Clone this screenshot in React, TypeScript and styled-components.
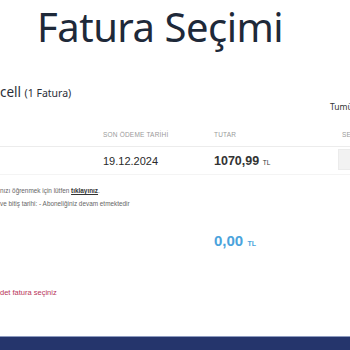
import styled, { createGlobalStyle } from "styled-components";

const GlobalStyle = createGlobalStyle`
  html, body {
    margin: 0;
    padding: 0;
    background: #ffffff;
  }
  body {
    width: 350px;
    height: 350px;
    overflow: hidden;
    font-family: "Liberation Sans", Arial, sans-serif;
  }
`;

const App = () => {
  return (
    <>
      <GlobalStyle />
      <Page>
        <Title>Fatura Seçimi</Title>
        <Company>
          cell <Count>(1 Fatura)</Count>
        </Company>
        <SelectAllRow>
          <SelectAll>Tumünü</SelectAll>
        </SelectAllRow>
        <HeaderRow>
          <span />
          <HeadCell>SON ÖDEME TARİHİ</HeadCell>
          <HeadCell>TUTAR</HeadCell>
          <HeadCell>SEÇ</HeadCell>
        </HeaderRow>
        <BillRow>
          <span />
          <DateCell>19.12.2024</DateCell>
          <Amount>
            1070,99 <Currency>TL</Currency>
          </Amount>
          <SelectBox />
        </BillRow>
        <Info>
          <InfoLine>
            nızı öğrenmek için lütfen <InfoLink>tıklayınız</InfoLink>.
          </InfoLine>
          <InfoLine>ve bitiş tarihi: - Aboneliğiniz devam etmektedir</InfoLine>
        </Info>
        <TotalRow>
          <Total>
            0,00 <TotalCurrency>TL</TotalCurrency>
          </Total>
        </TotalRow>
        <Warning>det fatura seçiniz</Warning>
        <Footer />
      </Page>
    </>
  );
};
export default App;

const Page = styled.div`
  width: 350px;
  height: 350px;
  display: flex;
  flex-direction: column;
  overflow: hidden;
`;

const Title = styled.h1`
  margin: 0;
  padding: 3px 0 0 37px;
  height: 57px;
  font-family: "Noto Sans", sans-serif;
  font-weight: 400;
  font-size: 40px;
  line-height: 48px;
  letter-spacing: -0.5px;
  color: #1e2939;
  white-space: nowrap;
`;

const Company = styled.div`
  margin-top: 23px;
  height: 18px;
  font-family: "Noto Sans", sans-serif;
  font-size: 13.5px;
  line-height: 18px;
  color: #2b2f38;
  white-space: nowrap;
`;

const Count = styled.span`
  font-size: 10.5px;
`;

const SelectAllRow = styled.div`
  display: flex;
  padding-left: 330px;
  height: 12px;
`;

const SelectAll = styled.span`
  font-family: "Noto Sans", sans-serif;
  font-size: 8.5px;
  line-height: 12px;
  color: #333;
  white-space: nowrap;
`;

const Grid = styled.div`
  display: grid;
  grid-template-columns: 103px 111px 128px 1fr;
  align-items: center;
  white-space: nowrap;
`;

const HeaderRow = styled(Grid)`
  margin-top: 10px;
  height: 23px;
  border-bottom: 1px solid #ececec;
`;

const HeadCell = styled.span`
  font-size: 6.5px;
  letter-spacing: 0.2px;
  color: #9a9a9a;
`;

const BillRow = styled(Grid)`
  height: 27px;
  border-bottom: 1px solid #f4f4f4;
`;

const DateCell = styled.span`
  font-size: 11px;
  color: #2a2a2a;
`;

const Amount = styled.span`
  font-size: 12.5px;
  font-weight: 700;
  color: #333;
`;

const Currency = styled.span`
  font-size: 6.5px;
  font-weight: 400;
`;

const SelectBox = styled.span`
  display: block;
  width: 14px;
  height: 19px;
  margin: 2px 0 0 -4px;
  background: #f2f2f2;
  border: 1px solid #ebebeb;
  align-self: start;
`;

const Info = styled.div`
  margin-top: 12px;
  display: flex;
  flex-direction: column;
  gap: 5px;
`;

const InfoLine = styled.div`
  font-size: 6.4px;
  line-height: 8px;
  color: #666;
  white-space: nowrap;
`;

const InfoLink = styled.a`
  color: #333;
  font-weight: 700;
  text-decoration: underline;
`;

const TotalRow = styled.div`
  margin-top: 24px;
  padding-left: 214px;
  height: 20px;
`;

const Total = styled.span`
  font-size: 15px;
  font-weight: 700;
  color: #4aa3dc;
  white-space: nowrap;
`;

const TotalCurrency = styled.span`
  font-size: 7px;
`;

const Warning = styled.div`
  margin-top: 36px;
  font-size: 7.5px;
  color: #b8345a;
  white-space: nowrap;
`;

const Footer = styled.div`
  margin-top: auto;
  height: 13px;
  background: #25356c;
  border-top: 1px solid #8d9bc0;
`;
